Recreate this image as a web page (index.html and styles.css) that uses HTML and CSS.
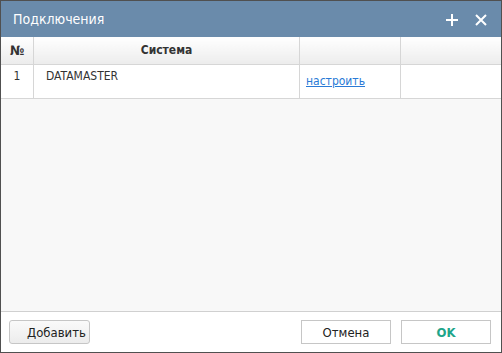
FILE: index.html
```html
<!DOCTYPE html>
<html lang="ru">
<head>
    <meta charset="UTF-8">
    <title>Подключения</title>
    <link rel="stylesheet" href="styles.css">
</head>
<body>

<div class="dialog">
    <div class="title-bar">
        <span class="title">Подключения</span>
        <div class="tools">
            <svg class="tool" width="14" height="14" viewBox="0 0 14 14"><path d="M7 1v12M1 7h12" stroke="#fff" stroke-width="2"/></svg>
            <svg class="tool" width="14" height="14" viewBox="0 0 14 14"><path d="M2 2l10 10M12 2L2 12" stroke="#fff" stroke-width="2"/></svg>
        </div>
    </div>

    <div class="grid">
        <table>
            <thead>
                <tr class="head-row">
                    <th class="col-num">№</th>
                    <th class="col-sys">Система</th>
                    <th class="col-act"></th>
                    <th class="col-last"></th>
                </tr>
            </thead>
            <tbody>
                <tr class="data-row">
                    <td class="num">1</td>
                    <td class="sys">DATAMASTER</td>
                    <td class="act"><a href="#">настроить</a></td>
                    <td></td>
                </tr>
            </tbody>
        </table>
    </div>

    <div class="footer">
        <button class="btn btn-add">Добавить</button>
        <div class="right">
            <button class="btn btn-wide">Отмена</button>
            <button class="btn btn-wide btn-ok">OK</button>
        </div>
    </div>
</div>

</body>
</html>
```

FILE: styles.css
```css
body {
    margin: 0;
    font-family: "DejaVu Sans Condensed", "DejaVu Sans", sans-serif;
    font-size: 12px;
}
.dialog {
    width: 502px;
    height: 353px;
    box-sizing: border-box;
    border: 1px solid #505050;
    display: flex;
    flex-direction: column;
    background-color: #fff;
}
.title-bar {
    height: 36px;
    background-color: #6a8bab;
    display: flex;
    align-items: center;
    justify-content: space-between;
    padding: 0 13px 0 12px;
}
.title {
    color: #fff;
    font-size: 14px;
}
.tools {
    display: flex;
    gap: 15px;
    margin-top: 1px;
}
.grid {
    flex: 1;
    background-color: #f8f8f8;
    border-bottom: 1px solid #d0d0d0;
}
table {
    width: 100%;
    border-collapse: collapse;
    table-layout: fixed;
    background-color: #fff;
}
.head-row {
    height: 27px;
}
.data-row {
    height: 34px;
}
th {
    padding: 0;
    background: linear-gradient(#ffffff, #ececec);
    border-right: 1px solid #d6d6d6;
    border-bottom: 1px solid #d6d6d6;
    color: #333;
    font-size: 12px;
    font-weight: bold;
    text-align: center;
}
th:last-child, td:last-child {
    border-right: none;
}
.col-num { width: 32px; }
.col-act { width: 100px; }
.col-last { width: 100px; }
th.col-num {
    font-size: 13px;
}
td {
    padding: 0;
    border-right: 1px solid #d6d6d6;
    border-bottom: 1px solid #d6d6d6;
    vertical-align: top;
    color: #333;
    font-size: 12px;
}
.num {
    text-align: center;
    padding-top: 4px;
}
.sys {
    padding: 4px 0 0 12px;
}
.act {
    padding: 9px 0 0 6px;
}
.act a {
    color: #2a7ad6;
}
.footer {
    height: 40px;
    display: flex;
    align-items: center;
    justify-content: space-between;
    padding: 0 10px 0 8px;
}
.right {
    display: flex;
    gap: 10px;
}
.btn {
    height: 24px;
    width: 81px;
    padding: 0;
    border: 1px solid #c6c6c6;
    border-radius: 3px;
    background: linear-gradient(#fafafa, #ececec);
    font-family: "DejaVu Sans Condensed", "DejaVu Sans", sans-serif;
    font-size: 13px;
    color: #222;
}
.btn-add {
    padding-left: 8px;
    text-align: left;
    padding-left: 17px;
}
.btn-wide {
    width: 90px;
    border-radius: 0;
    background: #fff;
}
.btn-ok {
    color: #1fa58a;
    font-weight: bold;
}
```
